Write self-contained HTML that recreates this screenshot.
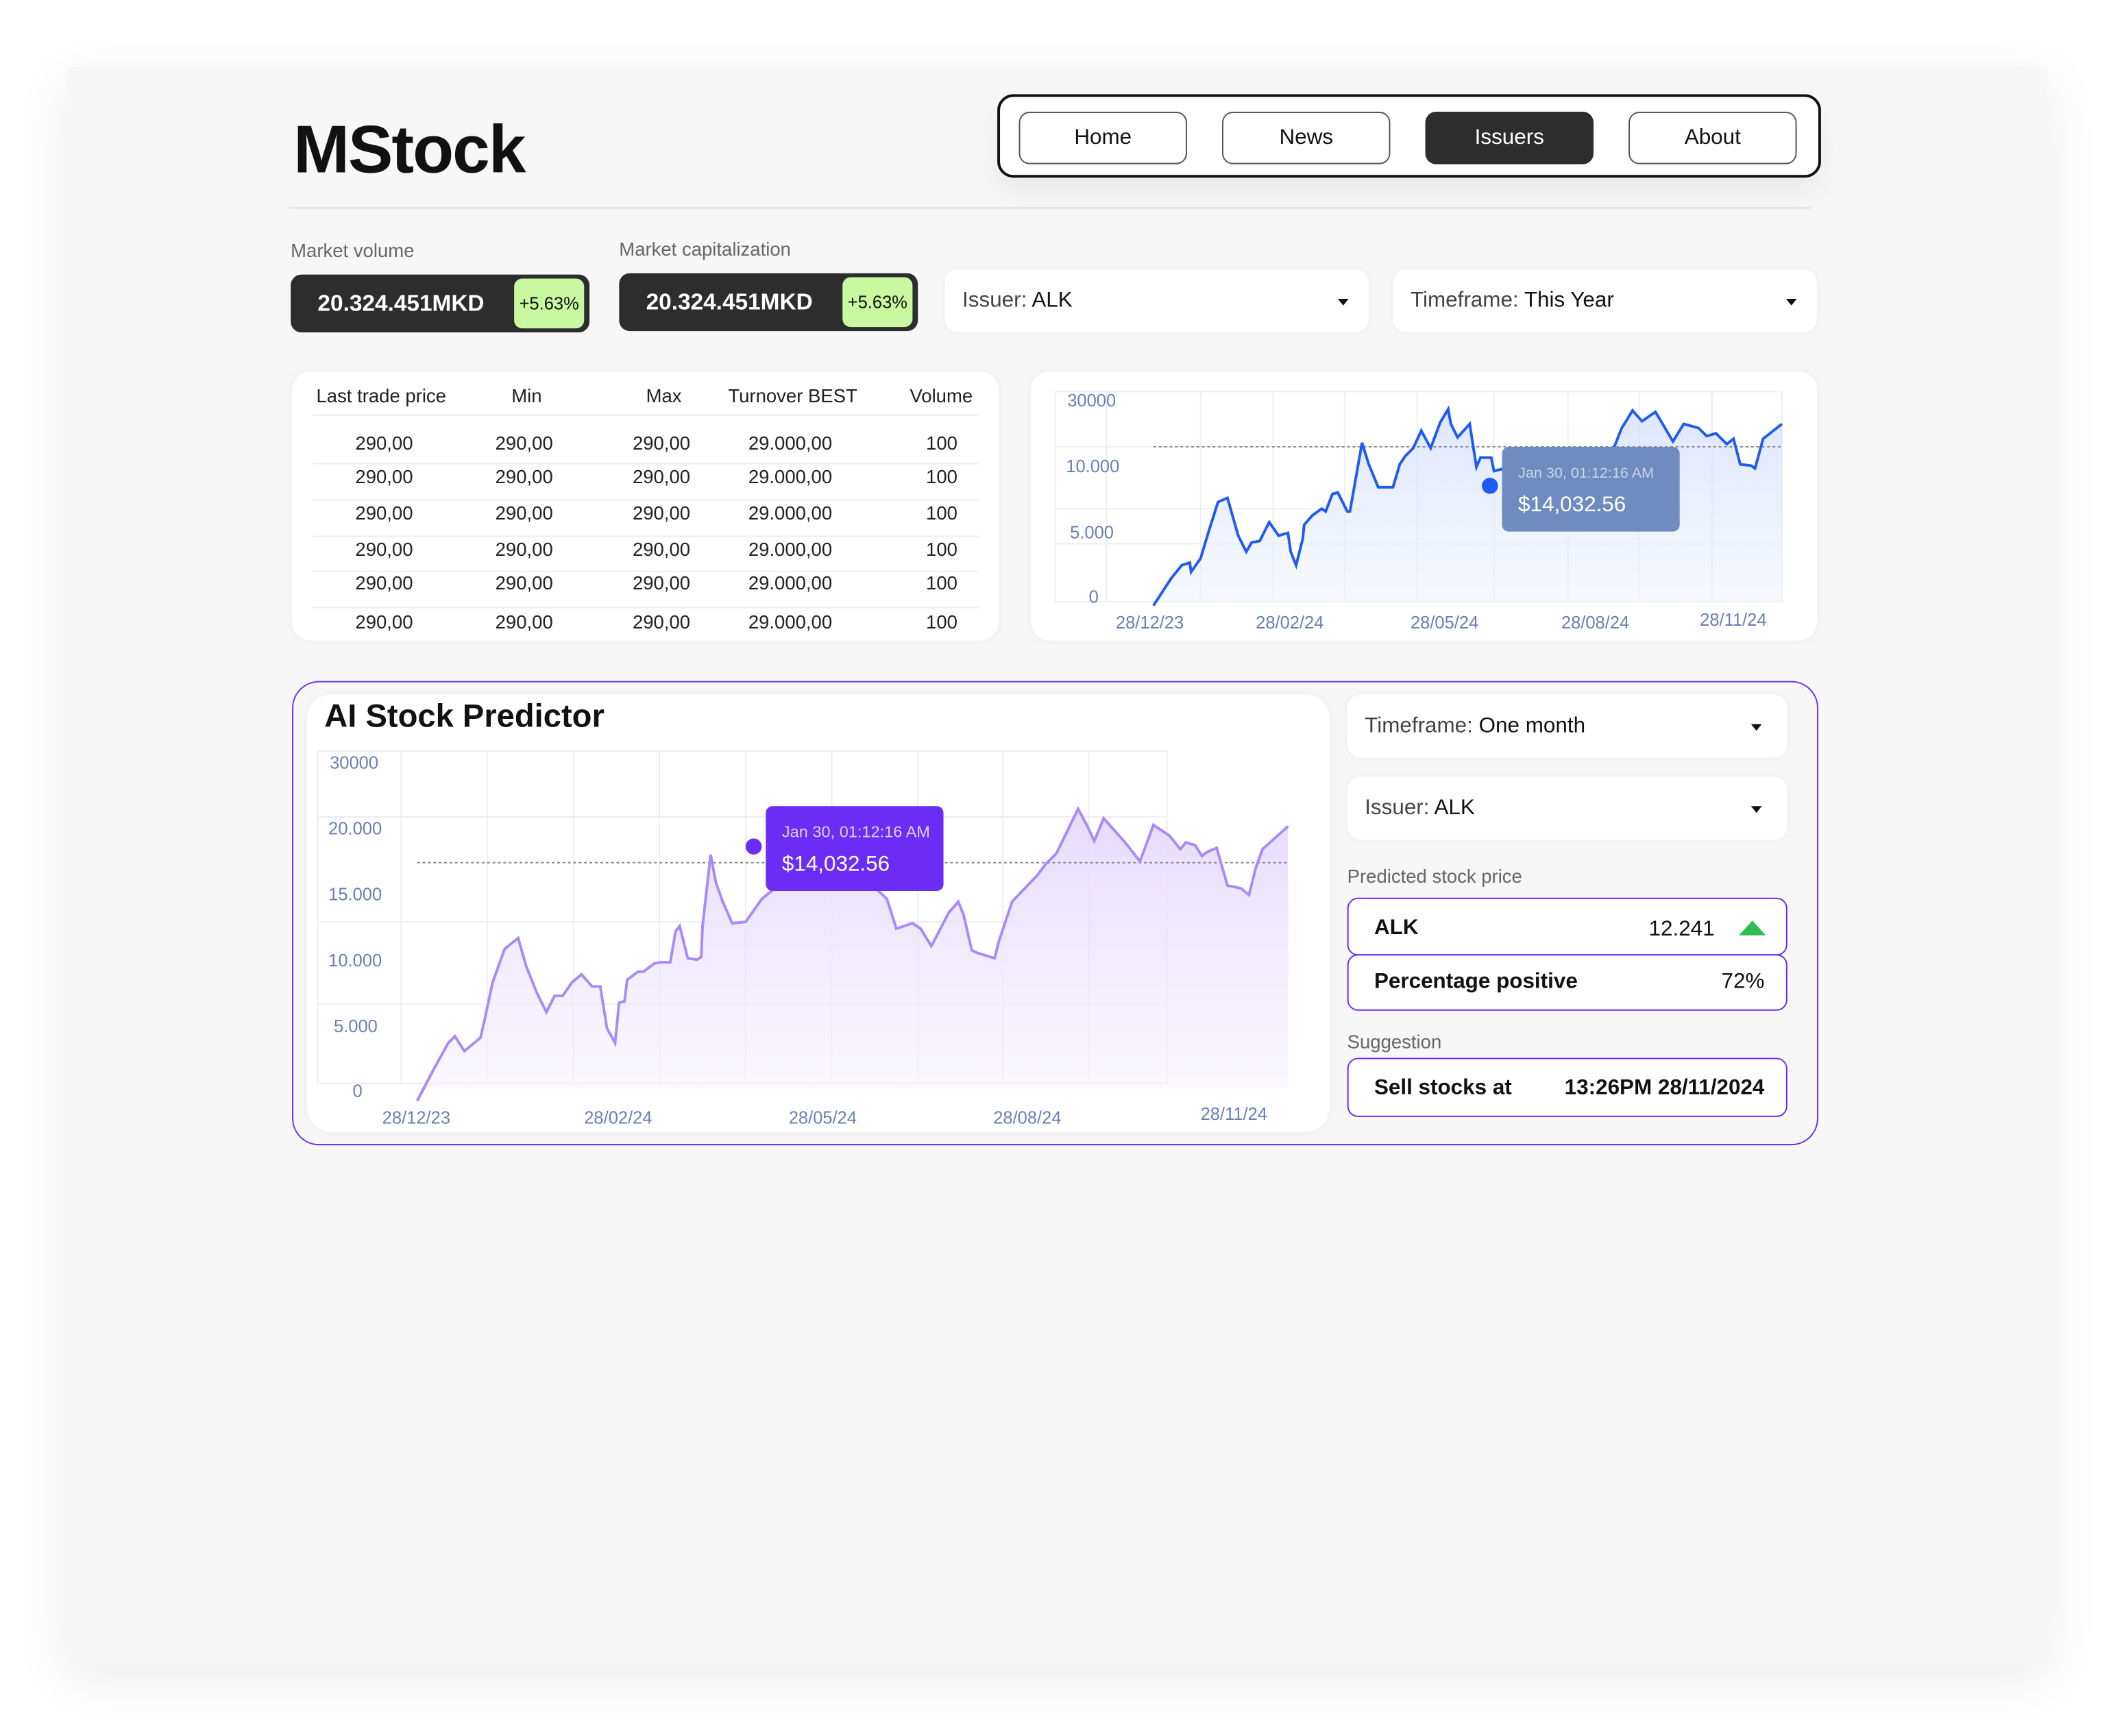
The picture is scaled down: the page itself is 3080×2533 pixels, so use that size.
<!DOCTYPE html>
<html><head><meta charset="utf-8"><style>
html,body{margin:0;padding:0;background:#fff;width:3080px;height:2524px;overflow:hidden}
#s{position:absolute;left:0;top:0;width:1570px;height:1290px;transform:scale(1.9637);transform-origin:0 0;font-family:"Liberation Sans",sans-serif;color:#111}
.a{position:absolute}
.card{position:absolute;background:#fff;border-radius:14px;box-shadow:0 0 6px rgba(0,0,0,.05)}
.btn{position:absolute;top:11px;width:125px;height:39px;border:1px solid #555;border-radius:8px;box-sizing:border-box;text-align:center;line-height:37px;font-size:16px;background:#fff}
.lbl{position:absolute;font-size:14px;color:#666}
.pill{position:absolute;background:#2d2d2d;border-radius:8px;height:43px;width:222px;color:#fff;font-weight:bold;font-size:17px}
.pill span{position:absolute;left:20px;top:12px}
.pill i{position:absolute;right:4px;top:3px;width:52px;height:37px;background:#c8f9a0;border-radius:6px;color:#111;font-style:normal;font-weight:normal;font-size:13px;text-align:center;line-height:37px}
.dd{position:absolute;background:#fff;border-radius:10px;box-shadow:0 0 4px rgba(0,0,0,.06);font-size:16px}
.dd span{position:absolute;left:13px;top:15px;color:#444}
.dd span b{font-weight:normal;color:#111}
.tri{position:absolute;width:0;height:0;border-left:4px solid transparent;border-right:4px solid transparent;border-top:5px solid #111}
.pb{position:absolute;left:1001px;width:327px;border:1.5px solid #6b2cf5;border-radius:8px;box-sizing:border-box;font-weight:bold;font-size:16px;background:#fff}
</style></head><body><div id="s">
<div class="a" style="left:50px;top:50px;width:1471px;height:1187px;background:#f7f7f7;box-shadow:0 10px 40px rgba(0,0,0,.08)"></div>
<div class="a" style="left:218px;top:82px;font-size:50px;font-weight:bold;letter-spacing:-1px">MStock</div>
<div class="a" style="left:741px;top:70px;width:612px;height:62px;border:2px solid #111;border-radius:12px;box-sizing:border-box;background:#fff;box-shadow:0 10px 20px rgba(0,0,0,.06)">
<div class="btn" style="left:14px">Home</div><div class="btn" style="left:165px">News</div>
<div class="btn" style="left:316px;background:#2d2d2d;color:#fff;border-color:#2d2d2d">Issuers</div><div class="btn" style="left:467px">About</div></div>
<div class="a" style="left:215px;top:154px;width:1131px;height:1px;background:#ddd"></div>
<div class="lbl" style="left:216px;top:178px">Market volume</div>
<div class="lbl" style="left:460px;top:177px">Market capitalization</div>
<div class="pill" style="left:216px;top:204px"><span>20.324.451MKD</span><i>+5.63%</i></div>
<div class="pill" style="left:460px;top:203px"><span>20.324.451MKD</span><i>+5.63%</i></div>
<div class="dd" style="left:702px;top:200px;width:315px;height:47px"><span>Issuer: <b>ALK</b></span><div class="tri" style="left:292px;top:22px"></div></div>
<div class="dd" style="left:1035px;top:200px;width:315px;height:47px"><span>Timeframe: <b>This Year</b></span><div class="tri" style="left:292px;top:22px"></div></div>

<div class="card" style="left:217px;top:276px;width:525px;height:200px"></div>
<div class="a" style="left:235px;top:286px;font-size:14px;color:#222">Last trade price</div>
<div class="a" style="left:380px;top:286px;font-size:14px;color:#222">Min</div>
<div class="a" style="left:480px;top:286px;font-size:14px;color:#222">Max</div>
<div class="a" style="left:541px;top:286px;font-size:14px;color:#222">Turnover BEST</div>
<div class="a" style="left:676px;top:286px;font-size:14px;color:#222">Volume</div>
<div class="a" style="left:232px;top:308px;width:495px;height:1px;background:#eee"></div>
<div class="a" style="left:232px;top:344px;width:495px;height:1px;background:#eee"></div>
<div class="a" style="left:232px;top:371px;width:495px;height:1px;background:#eee"></div>
<div class="a" style="left:232px;top:398px;width:495px;height:1px;background:#eee"></div>
<div class="a" style="left:232px;top:424px;width:495px;height:1px;background:#eee"></div>
<div class="a" style="left:232px;top:451px;width:495px;height:1px;background:#eee"></div>
<div id="rows"></div>
<script>
var ys=[321,346,373,400,425,454],h='';
ys.forEach(function(y){h+='<div class="a" style="left:264px;top:'+y+'px;font-size:14px;color:#222">290,00</div><div class="a" style="left:368px;top:'+y+'px;font-size:14px;color:#222">290,00</div><div class="a" style="left:470px;top:'+y+'px;font-size:14px;color:#222">290,00</div><div class="a" style="left:556px;top:'+y+'px;font-size:14px;color:#222">29.000,00</div><div class="a" style="left:688px;top:'+y+'px;font-size:14px;color:#222">100</div>';});
document.getElementById('rows').innerHTML=h;
</script>

<div class="card" style="left:766px;top:276px;width:584px;height:200px"></div>
<svg class="a" style="left:0;top:0" width="1560" height="1279" viewBox="0 0 1560 1279">
<defs><linearGradient id="gb" x1="0" y1="0" x2="0" y2="1"><stop offset="0" stop-color="#cfdcfb" stop-opacity=".7"/><stop offset="1" stop-color="#eef3fd" stop-opacity=".5"/></linearGradient>
<linearGradient id="gp" x1="0" y1="0" x2="0" y2="1"><stop offset="0" stop-color="#e3d6fb" stop-opacity=".9"/><stop offset="1" stop-color="#f6f2fd" stop-opacity=".5"/></linearGradient></defs>
<g stroke="#eee" stroke-width="1" fill="none">
<rect x="784" y="291" width="540" height="156"/>
<line x1="784" y1="332" x2="1324" y2="332"/><line x1="784" y1="378" x2="1324" y2="378"/><line x1="784" y1="404" x2="1324" y2="404"/>
<line x1="822" y1="291" x2="822" y2="447"/><line x1="892" y1="291" x2="892" y2="447"/><line x1="946" y1="291" x2="946" y2="447"/><line x1="999" y1="291" x2="999" y2="447"/><line x1="1053" y1="291" x2="1053" y2="447"/><line x1="1110" y1="291" x2="1110" y2="447"/><line x1="1165" y1="291" x2="1165" y2="447"/><line x1="1218" y1="291" x2="1218" y2="447"/><line x1="1272" y1="291" x2="1272" y2="447"/>
</g>
<polygon fill="url(#gb)" points="857,450 870,430 878,420 884,418 885,425 892,415 898,395 905,373 912,370 920,398 926,410 930,403 936,402 943,388 950,398 957,396 959,410 963,420 968,400 969,390 975,383 982,378 985,380 990,367 994,366 1001,380 1003,380 1012,329 1017,345 1024,362 1035,362 1040,345 1044,339 1050,333 1056,320 1063,333 1070,314 1076,304 1078,315 1083,325 1092,315 1097,347 1100,340 1108,340 1110,350 1150,340 1199,333 1205,318 1213,305 1220,313 1230,306 1243,328 1251,315 1262,318 1268,324 1275,322 1283,330 1288,326 1293,345 1301,346 1304,348 1310,326 1324,315 1324,447 857,447"/>
<line x1="857" y1="332" x2="1324" y2="332" stroke="#888" stroke-dasharray="2,2" stroke-width="1"/>
<polyline fill="none" stroke="#1f5af5" stroke-width="2" points="857,450 870,430 878,420 884,418 885,425 892,415 898,395 905,373 912,370 920,398 926,410 930,403 936,402 943,388 950,398 957,396 959,410 963,420 968,400 969,390 975,383 982,378 985,380 990,367 994,366 1001,380 1003,380 1012,329 1017,345 1024,362 1035,362 1040,345 1044,339 1050,333 1056,320 1063,333 1070,314 1076,304 1078,315 1083,325 1092,315 1097,347 1100,340 1108,340 1110,350 1150,340 1199,333 1205,318 1213,305 1220,313 1230,306 1243,328 1251,315 1262,318 1268,324 1275,322 1283,330 1288,326 1293,345 1301,346 1304,348 1310,326 1324,315"/>
<circle cx="1107" cy="361" r="6" fill="#1f5af5"/>
<rect x="1116" y="332" width="132" height="63" rx="5" fill="#6f8cc0"/>
<text x="1128" y="355" font-size="11" fill="#c8d3ea" font-family="Liberation Sans">Jan 30, 01:12:16 AM</text>
<text x="1128" y="380" font-size="16" fill="#fff" font-family="Liberation Sans">$14,032.56</text>
<g font-family="Liberation Sans" font-size="13" fill="#6b7fb5">
<text x="793" y="302">30000</text><text x="792" y="351">10.000</text><text x="795" y="400">5.000</text><text x="809" y="448">0</text>
<text x="829" y="467">28/12/23</text><text x="933" y="467">28/02/24</text><text x="1048" y="467">28/05/24</text><text x="1160" y="467">28/08/24</text><text x="1263" y="465">28/11/24</text>
</g>
</svg>

<div class="a" style="left:217px;top:506px;width:1134px;height:345px;border:1.5px solid #6b2cf5;border-radius:20px;box-sizing:border-box"></div>
<div class="card" style="left:228px;top:516px;width:760px;height:325px;border-radius:18px"></div>
<div class="a" style="left:241px;top:519px;font-size:24px;font-weight:bold">AI Stock Predictor</div>
<svg class="a" style="left:0;top:0" width="1560" height="1279" viewBox="0 0 1560 1279">
<g stroke="#eee" stroke-width="1" fill="none">
<rect x="236" y="558" width="631" height="247"/>
<line x1="236" y1="607" x2="867" y2="607"/><line x1="236" y1="685" x2="867" y2="685"/><line x1="236" y1="746" x2="867" y2="746"/>
<line x1="298" y1="558" x2="298" y2="805"/><line x1="362" y1="558" x2="362" y2="805"/><line x1="426" y1="558" x2="426" y2="805"/><line x1="490" y1="558" x2="490" y2="805"/><line x1="554" y1="558" x2="554" y2="805"/><line x1="618" y1="558" x2="618" y2="805"/><line x1="682" y1="558" x2="682" y2="805"/><line x1="745" y1="558" x2="745" y2="805"/><line x1="809" y1="558" x2="809" y2="805"/>
</g>
<polygon fill="url(#gp)" points="310,818 322,795 333,775 338,770 345,781 357,771 360,758 366,730 375,705 385,697 391,718 399,738 406,752 412,740 418,740 425,730 432,724 440,733 446,733 451,764 457,775 460,745 464,744 466,728 474,722 478,722 486,716 490,715 498,715 502,692 505,688 511,712 518,713 521,711 522,688 528,635 532,656 537,670 544,686 554,685 566,668 600,640 640,650 659,668 666,690 678,686 684,690 692,703 705,678 712,670 716,680 722,706 726,708 739,712 742,700 752,670 771,650 777,642 785,634 801,601 808,614 813,625 820,608 836,626 847,640 857,613 869,621 877,631 881,626 888,628 893,636 897,633 904,630 912,658 922,660 928,665 933,645 938,631 957,614 957,808 310,808"/>
<line x1="310" y1="641" x2="957" y2="641" stroke="#888" stroke-dasharray="2,2" stroke-width="1"/>
<polyline fill="none" stroke="#a98af8" stroke-width="2" points="310,818 322,795 333,775 338,770 345,781 357,771 360,758 366,730 375,705 385,697 391,718 399,738 406,752 412,740 418,740 425,730 432,724 440,733 446,733 451,764 457,775 460,745 464,744 466,728 474,722 478,722 486,716 490,715 498,715 502,692 505,688 511,712 518,713 521,711 522,688 528,635 532,656 537,670 544,686 554,685 566,668 600,640 640,650 659,668 666,690 678,686 684,690 692,703 705,678 712,670 716,680 722,706 726,708 739,712 742,700 752,670 771,650 777,642 785,634 801,601 808,614 813,625 820,608 836,626 847,640 857,613 869,621 877,631 881,626 888,628 893,636 897,633 904,630 912,658 922,660 928,665 933,645 938,631 957,614"/>
<circle cx="560" cy="629" r="6" fill="#6b2cf5"/>
<rect x="569" y="599" width="132" height="63" rx="5" fill="#6b2cf5"/>
<text x="581" y="622" font-size="12" fill="#ddd3fd" font-family="Liberation Sans">Jan 30, 01:12:16 AM</text>
<text x="581" y="647" font-size="16" fill="#fff" font-family="Liberation Sans">$14,032.56</text>
<g font-family="Liberation Sans" font-size="13" fill="#6b7fb5">
<text x="245" y="571">30000</text><text x="244" y="620">20.000</text><text x="244" y="669">15.000</text><text x="244" y="718">10.000</text><text x="248" y="767">5.000</text><text x="262" y="815">0</text>
<text x="284" y="835">28/12/23</text><text x="434" y="835">28/02/24</text><text x="586" y="835">28/05/24</text><text x="738" y="835">28/08/24</text><text x="892" y="832">28/11/24</text>
</g>
</svg>
<div class="dd" style="left:1001px;top:516px;width:327px;height:47px"><span>Timeframe: <b>One month</b></span><div class="tri" style="left:300px;top:22px"></div></div>
<div class="dd" style="left:1001px;top:577px;width:327px;height:47px"><span>Issuer: <b>ALK</b></span><div class="tri" style="left:300px;top:22px"></div></div>
<div class="lbl" style="left:1001px;top:643px">Predicted stock price</div>
<div class="pb" style="top:667px;height:43px"><span class="a" style="left:19px;top:13px">ALK</span><span class="a" style="left:223px;top:14px;font-weight:normal;color:#111">12.241</span><div class="a" style="left:290px;top:16px;width:0;height:0;border-left:10px solid transparent;border-right:10px solid transparent;border-bottom:11px solid #2ec04f"></div></div>
<div class="pb" style="top:709px;height:42px"><span class="a" style="left:19px;top:11px">Percentage positive</span><span class="a" style="right:16px;top:11px;font-weight:normal">72%</span></div>
<div class="lbl" style="left:1001px;top:766px">Suggestion</div>
<div class="pb" style="top:786px;height:44px"><span class="a" style="left:19px;top:13px">Sell stocks at</span><span class="a" style="right:16px;top:13px">13:26PM 28/11/2024</span></div>
</div></body></html>
